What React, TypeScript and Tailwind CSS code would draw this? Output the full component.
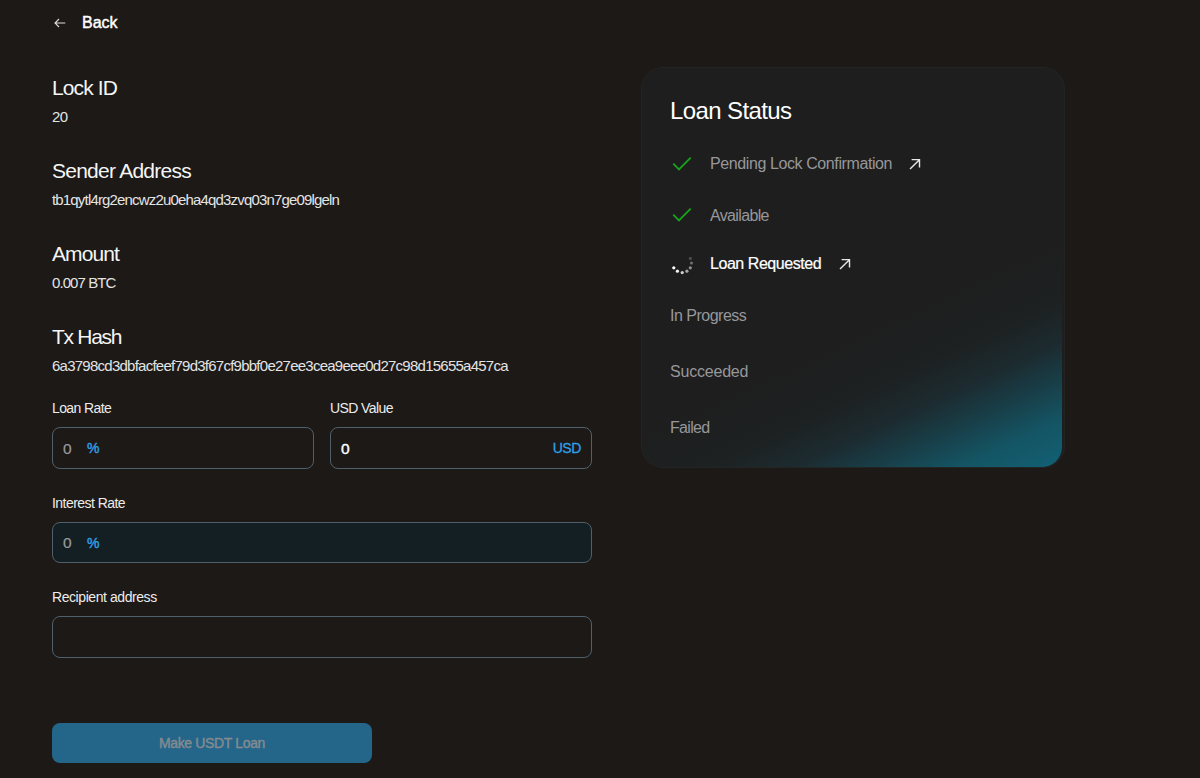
import React from 'react';

const details = [
  { label: 'Lock ID', value: '20', labelClass: 'tracking-[-0.9px]', valueClass: 'tracking-[-0.5px]' },
  { label: 'Sender Address', value: 'tb1qytl4rg2encwz2u0eha4qd3zvq03n7ge09lgeln', labelClass: 'tracking-[-0.75px]', valueClass: 'tracking-[-0.83px]' },
  { label: 'Amount', value: '0.007 BTC', labelClass: 'tracking-[-0.9px]', valueClass: 'tracking-[-0.92px]' },
  { label: 'Tx Hash', value: '6a3798cd3dbfacfeef79d3f67cf9bbf0e27ee3cea9eee0d27c98d15655a457ca', labelClass: 'tracking-[-1.3px]', valueClass: 'tracking-[-0.75px]' },
];

function CheckIcon() {
  return (
    <svg width="20" height="16" viewBox="0 0 20 16" fill="none" stroke="#17a317" strokeWidth="1.9">
      <path d="M1.3 7.6 7 13.4 18.7 1.7" />
    </svg>
  );
}

function ArrowUpRight() {
  return (
    <svg width="12" height="12" viewBox="0 0 12 12" fill="none" stroke="#e8e8e8" strokeWidth="1.4">
      <path d="M1 11 10.2 1.9M2.6 1.6h7.9v7.8" />
    </svg>
  );
}

const dots = [
  { x: 3.8, y: 12.8, o: 1 },
  { x: 7.4, y: 16.2, o: 0.95 },
  { x: 12.2, y: 17.6, o: 0.8 },
  { x: 16.9, y: 16.2, o: 0.6 },
  { x: 20.3, y: 12.8, o: 0.5 },
  { x: 21.5, y: 8, o: 0.35 },
  { x: 20.3, y: 3.4, o: 0.2 },
];

function Spinner() {
  return (
    <svg width="24" height="20" viewBox="0 0 24 20" fill="#fff">
      {dots.map((dot) => (
        <circle key={dot.x + '-' + dot.y} cx={dot.x} cy={dot.y} r="1.6" opacity={dot.o} />
      ))}
    </svg>
  );
}

function Field({ label, labelClass, className, children }: { label: string; labelClass: string; className?: string; children?: React.ReactNode }) {
  return (
    <div className="flex-1">
      <p className={`h-5 text-[14px] leading-5 text-[#ececec] ${labelClass}`}>{label}</p>
      <div className={`mt-[9px] flex h-[41.5px] items-center rounded-lg border border-[#50606a] px-[10px] ${className ?? ''}`}>
        {children}
      </div>
    </div>
  );
}

function Percent() {
  return (
    <>
      <span className="w-6 text-[15.5px] text-[#9b9b9b] [-webkit-text-stroke:0.2px]">0</span>
      <span className="mt-px text-[14px] text-[#2f9fe8] [-webkit-text-stroke:0.4px]">%</span>
    </>
  );
}

function LoanStatus() {
  return (
    <div className="relative mt-[67px] h-[401px] w-[424px] overflow-hidden rounded-[22px] border border-[#232424] bg-[#1e1e1e]">
      {/* Corner glow */}
      <div className="absolute inset-y-0 left-0 right-[2px] rounded-br-[20px] bg-[linear-gradient(155deg,#1e1e1e_62%,#1d2122_72%,#1c2b30_79%,#183f49_85.5%,#145564_92%,#125f73_99%)]" />
      <div className="relative px-[28px]">
        <h2 className="mt-[27px] text-[24px] leading-8 tracking-[-0.6px] text-white">Loan Status</h2>
        <div className="mt-[25px] text-[16px] leading-6 text-[#97979b]">
          <div className="flex h-6 items-center">
            <span className="w-[40px] pl-[2px]"><CheckIcon /></span>
            <span className="tracking-[-0.4px]">Pending Lock Confirmation</span>
            <span className="ml-[17px]"><ArrowUpRight /></span>
          </div>
          <div className="mt-[28px] flex h-6 items-center">
            <span className="mb-[3px] w-[40px] pl-[2px]"><CheckIcon /></span>
            <span className="tracking-[-0.65px]">Available</span>
          </div>
          <div className="mt-[24px] flex h-6 items-center text-white">
            <span className="mt-[2px] w-[40px]"><Spinner /></span>
            <span className="tracking-[-0.45px] [-webkit-text-stroke:0.2px]">Loan Requested</span>
            <span className="ml-[18px]"><ArrowUpRight /></span>
          </div>
          <p className="mt-[28px] tracking-[-0.5px]">In Progress</p>
          <p className="mt-[32px] tracking-[-0.2px]">Succeeded</p>
          <p className="mt-[32px] tracking-[-0.7px]">Failed</p>
        </div>
      </div>
    </div>
  );
}

export default function App() {
  return (
    <div className="flex h-[778px] w-[1200px] overflow-hidden bg-[#1c1916] pl-[52px] font-['Liberation_Sans',Arial,sans-serif]">
      <div className="w-[540px]">
        {/* Back link */}
        <div className="mt-[11px] flex h-6 items-center">
          <svg width="12" height="10" viewBox="0 0 12 10" fill="none" stroke="#dedede" strokeWidth="1.1" className="ml-[2px]">
            <path d="M11.3 5H1M5 1 1 5l4 4" />
          </svg>
          <span className="ml-[16px] text-[16px] text-white [-webkit-text-stroke:0.4px]">Back</span>
        </div>

        <div className="mt-[39px]">
          {details.map((item) => (
            <div key={item.label} className="h-[83.1px]">
              <p className={`text-[21px] leading-7 text-[#f5f5f5] ${item.labelClass}`}>{item.label}</p>
              <p className={`mt-[3px] text-[15px] leading-6 text-[#e4e4e4] ${item.valueClass}`}>{item.value}</p>
            </div>
          ))}
        </div>

        {/* Loan form */}
        <div className="-mt-[8px] flex flex-col gap-6">
          <div className="flex gap-4">
            <Field label="Loan Rate" labelClass="tracking-[-0.6px]"><Percent /></Field>
            <Field label="USD Value" labelClass="tracking-[-0.6px]" className="justify-between">
              <span className="text-[15.5px] text-white [-webkit-text-stroke:0.4px]">0</span>
              <span className="mt-px text-[14px] tracking-[-0.4px] text-[#2f9fe8] [-webkit-text-stroke:0.3px]">USD</span>
            </Field>
          </div>
          <Field label="Interest Rate" labelClass="tracking-[-0.55px]" className="bg-[#141f24]"><Percent /></Field>
          <Field label="Recipient address" labelClass="tracking-[-0.43px]" />
        </div>

        <button disabled className="mt-[65.5px] h-10 w-[320px] rounded-lg bg-[#23668a] text-[14px] tracking-[-0.35px] text-[#858b90] [-webkit-text-stroke:0.4px]">
          Make USDT Loan
        </button>
      </div>

      <div className="ml-[49px]">
        <LoanStatus />
      </div>
    </div>
  );
}
